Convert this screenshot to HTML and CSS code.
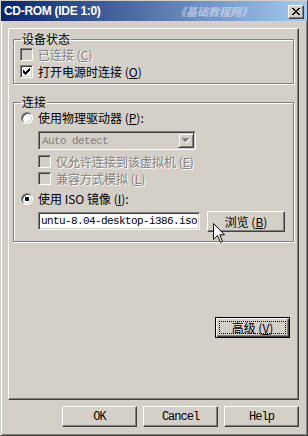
FILE: index.html
```html
<!DOCTYPE html>
<html lang="zh-CN">
<head>
  <meta charset="UTF-8" />
  <title>CD-ROM (IDE 1:0)</title>
  <link rel="stylesheet" href="styles.css">
</head>
<body>

  <div class="window">
    <div class="titlebar">
      <span class="title">CD-ROM (IDE 1:0)</span>
      <span class="watermark">《基础教程网》</span>
      <button class="close" title="关闭">
        <svg width="8" height="7" viewBox="0 0 8 7" shape-rendering="crispEdges">
          <path d="M0 0h2v1h-2z M6 0h2v1h-2z M1 1h2v1h-2z M5 1h2v1h-2z M2 2h4v1h-4z M3 3h2v1h-2z M2 4h4v1h-4z M1 5h2v1h-2z M5 5h2v1h-2z M0 6h2v1h-2z M6 6h2v1h-2z" fill="#000"/>
        </svg>
      </button>
    </div>

    <div class="content">
      <div class="panel">
        <!-- Device status -->
        <fieldset class="group status">
          <legend>设备状态</legend>
          <label class="option disabled">
            <span class="checkbox"></span>
            <span class="text">已连接 (<u>C</u>)</span>
          </label>
          <label class="option">
            <span class="checkbox"><svg width="11" height="11" viewBox="1 1 11 11" shape-rendering="crispEdges"><path d="M3 5h1v1h1v1h1v-1h1v-1h1v-1h1v-1h1v3h-1v1h-1v1h-1v1h-1v1h-1v-1h-1v-1h-1z" fill="#000"/></svg></span>
            <span class="text">打开电源时连接 (<u>O</u>)</span>
          </label>
        </fieldset>

        <!-- Connection -->
        <fieldset class="group connect">
          <legend>连接</legend>
          <label class="option">
            <span class="radio"></span>
            <span class="text">使用物理驱动器 (<u>P</u>):</span>
          </label>
          <div class="indent">
            <div class="combo">
              <span class="combo-text">Auto detect</span>
              <span class="combo-drop">
                <svg width="8" height="5" viewBox="0 0 8 5" shape-rendering="crispEdges">
                  <path d="M1 1h7v1h-1v1h-1v1h-1v1h-1v-1h-1v-1h-1v-1h-1z" fill="#fff"/>
                  <path d="M0 0h7v1h-1v1h-1v1h-1v1h-1v-1h-1v-1h-1v-1h-1z" fill="#808080"/>
                </svg>
              </span>
            </div>
            <label class="option disabled sub">
              <span class="checkbox"></span>
              <span class="text">仅允许连接到该虚拟机 (<u>E</u>)</span>
            </label>
            <label class="option disabled">
              <span class="checkbox"></span>
              <span class="text">兼容方式模拟 (<u>L</u>)</span>
            </label>
          </div>
          <label class="option iso">
            <span class="radio checked"></span>
            <span class="text">使用 ISO 镜像 (<u>I</u>):</span>
          </label>
          <div class="indent iso-row">
            <div class="textbox">untu-8.04-desktop-i386.iso</div>
            <button class="btn browse">浏览 (<u>B</u>)</button>
          </div>
        </fieldset>

        <div class="advanced-row">
          <button class="btn default"><span class="focus">高级 (<u>V</u>)</span></button>
        </div>
      </div>

      <div class="footer">
        <button class="btn latin">OK</button>
        <button class="btn latin">Cancel</button>
        <button class="btn latin">Help</button>
      </div>
    </div>

    <!-- mouse pointer over the browse button -->
    <svg class="pointer" width="13" height="21" viewBox="0 0 13 21">
      <path d="M0.5 0.5 L0.5 16.5 L4.5 12.5 L7.5 19.5 L9.5 18.5 L6.8 11.8 L11.5 11.8 Z" fill="#fff" stroke="#000" stroke-width="1" stroke-linejoin="miter"/>
    </svg>
  </div>

</body>
</html>
```

FILE: styles.css
```css
body {
  margin: 0;
  font-family: "Noto Sans CJK SC", sans-serif;
  font-size: 12px;
  color: #000;
  background-color: #d4d0c8;
}

.window {
  position: relative;
  width: 308px;
  height: 436px;
  box-sizing: border-box;
  border: 1px solid;
  border-color: #d4d0c8 #404040 #404040 #d4d0c8;
  background-color: #d4d0c8;
  display: flex;
  flex-direction: column;
}

/* Title bar */
.titlebar {
  position: relative;
  flex: none;
  height: 20px;
  display: flex;
  align-items: center;
  padding: 0 3px 0 3px;
  background: linear-gradient(to right, #0a246a, #a6caf0);
}

.title {
  font-family: "Liberation Sans", Arial, sans-serif;
  font-weight: bold;
  font-size: 12px;
  letter-spacing: -0.3px;
  color: #fff;
}

.watermark {
  position: absolute;
  left: 174px;
  top: 3px;
  font-size: 11px;
  line-height: 14px;
  font-weight: bold;
  font-style: italic;
  color: rgba(226, 232, 248, 0.6);
}

.close {
  margin-left: auto;
  margin-top: 1px;
  width: 16px;
  height: 14px;
  padding: 0;
  display: flex;
  align-items: center;
  justify-content: center;
  background-color: #d4d0c8;
  border: 1px solid;
  border-color: #fff #404040 #404040 #fff;
  box-shadow: inset -1px -1px #808080;
}

/* Dialog body */
.content {
  flex: 1;
  padding: 7px 8px 0 7px;
  box-shadow: inset 1px 0 #fff, inset -1px -1px #808080;
}

.panel {
  height: 372px;
  box-sizing: border-box;
  padding: 4px 4px;
  border: 1px solid;
  border-color: #fff #404040 #404040 #fff;
  box-shadow: inset -1px -1px #808080;
  display: flex;
  flex-direction: column;
}

/* Group boxes */
.group {
  margin: 0;
  padding: 1px 6px 3px 6px;
  border: 1px solid #808080;
  box-shadow: inset 1px 1px #fff, 1px 1px #fff;
  min-width: 0;
}

.group legend {
  margin-left: 1px;
  padding: 0 1px;
  font-size: 12px;
  line-height: 12px;
}

.connect {
  margin-top: 12px;
  padding-bottom: 9px;
}

.option {
  height: 17px;
  display: flex;
  align-items: center;
  white-space: nowrap;
  line-height: 17px;
}

.option u {
  text-underline-offset: 1px;
}

.option.disabled {
  color: #808080;
  text-shadow: 1px 1px #fff;
}

.checkbox {
  flex: none;
  width: 13px;
  height: 13px;
  box-sizing: border-box;
  margin-right: 5px;
  border: 1px solid;
  border-color: #808080 #fff #fff #808080;
  box-shadow: inset 1px 1px #404040, inset -1px -1px #d4d0c8;
  background-color: #fff;
}

.checkbox svg {
  display: block;
}

.disabled .checkbox {
  background-color: #d4d0c8;
}

.radio {
  position: relative;
  flex: none;
  width: 12px;
  height: 12px;
  box-sizing: border-box;
  margin: 0 5px 0 1px;
  border-radius: 50%;
  border: 1px solid;
  border-color: #808080 #fff #fff #808080;
  box-shadow: inset 1px 1px #404040, inset -1px -1px #d4d0c8;
  background-color: #fff;
}

.radio.checked::after {
  content: "";
  position: absolute;
  left: 3px;
  top: 3px;
  width: 4px;
  height: 4px;
  border-radius: 1px;
  background-color: #000;
}

.indent {
  margin-left: 18px;
}

/* Combo box */
.combo {
  margin-top: 5px;
  width: 158px;
  height: 19px;
  box-sizing: border-box;
  display: flex;
  align-items: center;
  border: 1px solid;
  border-color: #808080 #fff #fff #808080;
  box-shadow: inset 1px 1px #404040, inset -1px -1px #d4d0c8;
  padding: 1px 1px 1px 3px;
  background-color: #d4d0c8;
}

.combo-text {
  flex: 1;
  font-family: "Liberation Mono", monospace;
  font-size: 11px;
  letter-spacing: -0.6px;
  color: #808080;
}

.combo-drop {
  flex: none;
  width: 16px;
  height: 15px;
  box-sizing: border-box;
  display: flex;
  align-items: center;
  justify-content: center;
  border: 1px solid;
  border-color: #d4d0c8 #404040 #404040 #d4d0c8;
  box-shadow: inset 1px 1px #fff, inset -1px -1px #808080;
}

.option.sub {
  margin-top: 3px;
}

.option.iso {
  margin-top: 3px;
}

/* ISO image row */
.iso-row {
  margin-top: 4px;
  display: flex;
  align-items: flex-start;
  gap: 7px;
}

.textbox {
  margin-top: 1px;
  width: 162px;
  height: 18px;
  box-sizing: border-box;
  padding: 0 2px;
  border: 1px solid;
  border-color: #808080 #fff #fff #808080;
  box-shadow: inset 1px 1px #404040, inset -1px -1px #d4d0c8;
  background-color: #fff;
  font-family: "Liberation Mono", monospace;
  font-size: 11px;
  letter-spacing: -0.6px;
  line-height: 16px;
  white-space: nowrap;
  overflow: hidden;
}

/* Buttons */
.btn {
  width: 75px;
  height: 21px;
  padding: 0;
  font-family: "Noto Sans CJK SC", sans-serif;
  font-size: 12px;
  color: #000;
  white-space: nowrap;
  background-color: #d4d0c8;
  border: 1px solid;
  border-color: #fff #404040 #404040 #fff;
  box-shadow: inset -1px -1px #808080;
}

.btn.latin {
  font-family: "Liberation Mono", monospace;
  font-size: 12px;
  letter-spacing: -1px;
}

.browse {
  width: 78px;
}

.advanced-row {
  margin-top: 75px;
  display: flex;
  justify-content: flex-end;
  padding-right: 4px;
}

.btn.default {
  border: 1px solid #000;
  box-shadow: inset 1px 1px #fff, inset -1px -1px #404040, inset -2px -2px #808080;
  padding: 3px;
}

.focus {
  display: block;
  height: 100%;
  box-sizing: border-box;
  border: 1px dotted #000;
  line-height: 11px;
}

.footer {
  margin-top: 6px;
  display: flex;
  justify-content: flex-end;
  gap: 6px;
}

.pointer {
  position: absolute;
  left: 212px;
  top: 222px;
}
```
